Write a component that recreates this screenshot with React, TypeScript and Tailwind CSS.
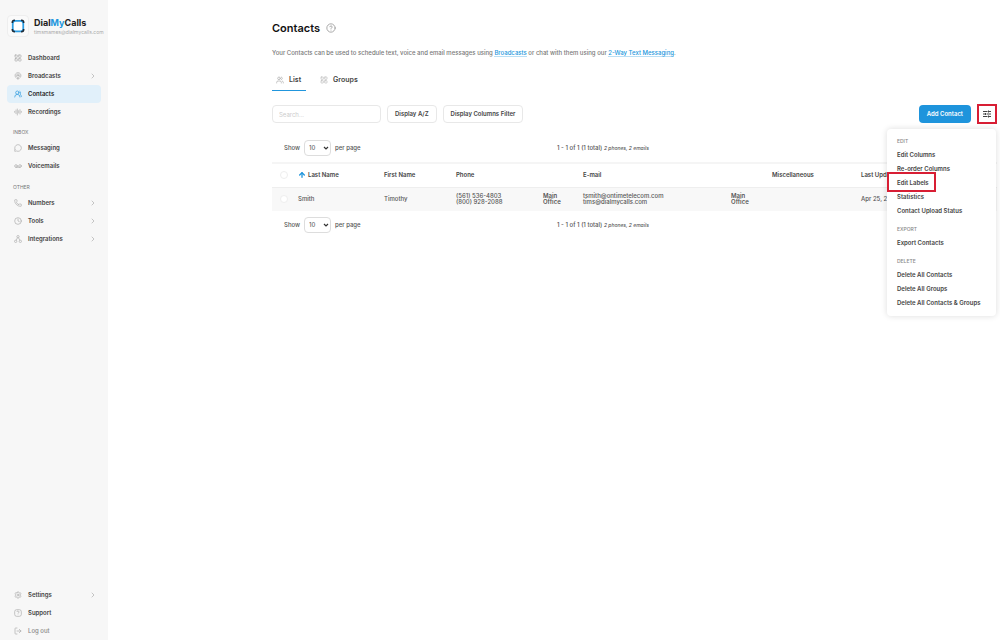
import { useState } from "react";
import type { ReactNode } from "react";
import {
  ArrowUp,
  AudioLines,
  ChevronRight,
  CircleQuestionMark,
  Clock,
  LayoutGrid,
  LogOut,
  MessageCircle,
  Phone,
  Podcast,
  Settings,
  Users,
  UsersRound,
  Voicemail,
} from "lucide-react";

type NavItem = {
  label: string;
  icon: ReactNode;
  arrow?: boolean;
  active?: boolean;
  muted?: boolean;
};

const iconClass = "w-2 h-2 shrink-0";

function IntegrationsIcon() {
  return (
    <svg viewBox="0 0 24 24" className={iconClass} fill="none" stroke="currentColor" strokeWidth="2">
      <circle cx="12" cy="5" r="3.500" />
      <circle cx="5" cy="19" r="3.500" />
      <circle cx="19" cy="19" r="3.500" />
      <path d="M10.500 8L6.500 16M13.500 8l4 8" />
    </svg>
  );
}

function SupportIcon() {
  return (
    <svg viewBox="0 0 24 24" className={iconClass} fill="none" stroke="currentColor" strokeWidth="2">
      <rect x="2" y="2" width="20" height="20" rx="6" />
      <path d="M9 9a3 3 0 1 1 4.500 2.600c-1 .6-1.500 1-1.500 2.400M12 17v1" />
    </svg>
  );
}

const mainNav: NavItem[] = [
  { label: "Dashboard", icon: <LayoutGrid className={iconClass} /> },
  { label: "Broadcasts", icon: <Podcast className={iconClass} />, arrow: true },
  { label: "Contacts", icon: <UsersRound className={iconClass} />, active: true },
  { label: "Recordings", icon: <AudioLines className={iconClass} /> },
];

const inboxNav: NavItem[] = [
  { label: "Messaging", icon: <MessageCircle className={iconClass} /> },
  { label: "Voicemails", icon: <Voicemail className={iconClass} /> },
];

const otherNav: NavItem[] = [
  { label: "Numbers", icon: <Phone className={iconClass} />, arrow: true },
  { label: "Tools", icon: <Clock className={iconClass} />, arrow: true },
  { label: "Integrations", icon: <IntegrationsIcon />, arrow: true },
];

const footerNav: NavItem[] = [
  { label: "Settings", icon: <Settings className={iconClass} />, arrow: true },
  { label: "Support", icon: <SupportIcon /> },
  { label: "Log out", icon: <LogOut className={iconClass} />, muted: true },
];

const menu = [
  {
    title: "EDIT",
    items: ["Edit Columns", "Re-order Columns", "Edit Labels", "Statistics", "Contact Upload Status"],
  },
  { title: "EXPORT", items: ["Export Contacts"] },
  { title: "DELETE", items: ["Delete All Contacts", "Delete All Groups", "Delete All Contacts & Groups"] },
];

function Logo() {
  return (
    <svg viewBox="0 0 16 16" className="h-3.5 w-3.5" fill="none">
      <rect x="2" y="2" width="12" height="12" rx="3" fill="#fff" stroke="#2a9be0" strokeWidth="2" />
      <path
        d="M1.500 4.500V4Q1.500 1.500 4 1.500h.5M11.500 1.500H12q2.500 0 2.500 2.500v.5M14.500 11.500V12q0 2.500-2.500 2.500h-.5M4.500 14.500H4Q1.500 14.500 1.500 12v-.5"
        stroke="#1e2b38"
        strokeWidth="1.800"
      />
    </svg>
  );
}

function NavList({ items }: { items: NavItem[] }) {
  return (
    <ul>
      {items.map((item) => (
        <li key={item.label}>
          <a
            href="#"
            className={
              "flex h-[18px] items-center gap-1.5 rounded-sm pl-[7px] pr-1 text-[6px] " +
              (item.active
                ? "bg-[#e1f0fa] font-semibold text-[#222]"
                : item.muted
                  ? "font-medium text-[#888]"
                  : "font-semibold text-[#444]")
            }
          >
            <span className={item.active ? "text-[#2196dd]" : "text-[#aaa]"}>{item.icon}</span>
            <span className="flex-1">{item.label}</span>
            {item.arrow && <ChevronRight className="h-2 w-2 text-[#aaa]" />}
          </a>
        </li>
      ))}
    </ul>
  );
}

function Pager({ id }: { id: string }) {
  return (
    <div className="grid grid-cols-[285px_1fr] items-center text-[6px] font-medium text-[#555]">
      <div className="flex items-center gap-1 pl-3">
        <label htmlFor={id}>Show</label>
        <span className="relative flex items-center">
          <select
            id={id}
            defaultValue="10"
            className="h-4 w-[27px] appearance-none rounded-sm border border-[#ddd] bg-white pl-1 text-[#666]"
          >
            <option>10</option>
            <option>25</option>
            <option>50</option>
          </select>
          <svg viewBox="0 0 6 4" className="pointer-events-none absolute right-0.5 h-1 w-1.5">
            <path d="M1 1l2 2 2-2" stroke="#333" strokeWidth="1.2" fill="none" />
          </svg>
        </span>
        <span>per page</span>
      </div>
      <p>
        1 - 1 of 1 (1 total) <em className="text-[5px]">2 phones, 2 emails</em>
      </p>
    </div>
  );
}

export default function App() {
  const [search, setSearch] = useState("");

  return (
    <div className="flex min-h-screen bg-white font-['Inter',sans-serif] text-[6px] leading-[8px] text-[#333]">
      <aside className="flex w-[108px] shrink-0 flex-col bg-[#f7f7f7] px-[7px] pt-[15px]">
        <div className="flex items-center gap-[5px]">
          <span className="flex h-[22px] w-[22px] shrink-0 items-center justify-center rounded-sm border border-[#eee] bg-[#fafafa]">
            <Logo />
          </span>
          <div className="min-w-0">
            <p className="text-[9px] font-bold leading-[11px] text-[#222]">
              Dial<span className="text-[#2196dd]">My</span>Calls
            </p>
            <p className="whitespace-nowrap text-[5px] text-[#aaa]">timsmames@dialmycalls.com</p>
          </div>
        </div>
        <nav className="flex flex-1 flex-col pt-3">
          <NavList items={mainNav} />
          <h2 className="pt-[7px] pb-[3px] pl-1.5 text-[5px] text-[#777]">INBOX</h2>
          <NavList items={inboxNav} />
          <h2 className="pt-2 pb-[3px] pl-1.5 text-[5px] text-[#777]">OTHER</h2>
          <NavList items={otherNav} />
          <div className="mt-auto">
            <NavList items={footerNav} />
          </div>
        </nav>
      </aside>

      <main className="min-w-0 flex-1 pt-[21px] pr-[3px] pl-[164px]">
        <h1 className="flex items-center gap-1.5 text-[11px] font-semibold leading-[14px] text-[#111]">
          Contacts
          <CircleQuestionMark className="h-2.5 w-2.5 text-[#999]" />
        </h1>
        <p className="pt-3.5 font-medium text-[#777]">
          Your Contacts can be used to schedule text, voice and email messages using{" "}
          <a href="#" className="border-b border-[#b9dff5] text-[#2196dd]">Broadcasts</a> or chat with them using our{" "}
          <a href="#" className="border-b border-[#b9dff5] text-[#2196dd]">2-Way Text Messaging</a>.
        </p>

        <div className="flex gap-2.5 pt-[13px] text-[7px] font-semibold text-[#444]">
          <button
            type="button"
            className="flex h-[21px] items-center gap-[5px] border-b border-[#2196dd] pr-[5px] pl-1"
          >
            <Users className="h-2 w-2 text-[#aaa]" />
            List
          </button>
          <button
            type="button"
            className="flex h-[21px] items-center gap-[5px] border-b border-transparent px-1"
          >
            <LayoutGrid className="h-2 w-2 text-[#bbb]" />
            Groups
          </button>
        </div>

        <div className="flex items-center gap-1.5 pt-[13px] font-semibold text-[#444]">
          <input
            type="text"
            aria-label="Search"
            placeholder="Search..."
            value={search}
            onChange={(e) => setSearch(e.target.value)}
            className="h-[18px] w-[109px] rounded-sm border border-[#e8e8e8] px-1.5 font-normal placeholder:text-[#ccc]"
          />
          <button type="button" className="h-[18px] rounded-sm border border-[#e8e8e8] px-[7px]">
            Display A/Z
          </button>
          <button type="button" className="h-[18px] rounded-sm border border-[#e8e8e8] px-[7px]">
            Display Columns Filter
          </button>
          <button
            type="button"
            className="ml-auto h-[18px] rounded-sm bg-[#1e94dc] px-2 font-semibold text-white"
          >
            Add Contact
          </button>
          <div className="relative">
            <button
              type="button"
              aria-label="More options"
              className="flex h-5 w-5 items-center justify-center border-2 border-[#d81e34]"
            >
              <svg viewBox="0 0 8 8" className="h-2 w-2" stroke="#444" strokeWidth="1">
                <path d="M0 1.500h4.500M6 1.500h2M0 4h2M3.500 4h4.500M0 6.500h4.500M6 6.500h2M5.500 .5v2M2.500 3v2M5.500 5.500v2" />
              </svg>
            </button>
            <div className="absolute top-[25px] right-px z-10 w-[109px] rounded-sm bg-white pt-2 pb-1.5 pl-2.5 shadow-[0_0_6px_rgba(0,0,0,0.14)]">
              {menu.map((group) => (
                <section key={group.title} className="pb-[7px] last:pb-0">
                  <h3 className="h-[11px] text-[5px] font-medium text-[#888]">{group.title}</h3>
                  {group.items.map((label) => (
                    <a key={label} href="#" className="relative flex h-3.5 items-center whitespace-nowrap">
                      {label}
                      {label === "Edit Labels" && (
                        <span className="absolute -top-1 -left-2.5 h-5 w-[49px] border-2 border-[#d81e34]" />
                      )}
                    </a>
                  ))}
                </section>
              ))}
            </div>
          </div>
        </div>

        <div className="pt-4 pb-1.5">
          <Pager id="per-page-top" />
        </div>
        <table className="w-full table-fixed border-t-2 border-[#f5f5f5] text-left">
          <colgroup>
            <col className="w-[26px]" />
            <col className="w-[86px]" />
            <col className="w-[72px]" />
            <col className="w-[87px]" />
            <col className="w-10" />
            <col className="w-[148px]" />
            <col className="w-[41px]" />
            <col className="w-[89px]" />
            <col />
          </colgroup>
          <thead>
            <tr className="h-6 text-[#444] [&>th]:font-semibold">
              <th className="pl-2">
                <input
                  type="checkbox"
                  aria-label="Select all"
                  className="block h-2 w-2 appearance-none rounded-sm border border-[#eee] bg-white"
                />
              </th>
              <th>
                <span className="flex items-center gap-0.5">
                  <ArrowUp className="h-2 w-2 text-[#2196dd]" strokeWidth={4} />
                  Last Name
                </span>
              </th>
              <th>First Name</th>
              <th colSpan={2}>Phone</th>
              <th colSpan={2}>E-mail</th>
              <th>Miscellaneous</th>
              <th>Last Updated</th>
            </tr>
          </thead>
          <tbody>
            <tr className="h-6 border-t border-[#eee] bg-[#f8f8f8] font-medium text-[#555]">
              <td className="pl-2">
                <input
                  type="checkbox"
                  aria-label="Select Timothy Smith"
                  className="block h-2 w-2 appearance-none rounded-sm border border-[#eee] bg-white"
                />
              </td>
              <td>Smith</td>
              <td>Timothy</td>
              <td className="leading-[6px]">(561) 536-4803<br />(800) 928-2088</td>
              <td className="font-semibold leading-[6px]">Main<br />Office</td>
              <td className="leading-[6px]">tsmith@ontimetelecom.com<br />tims@dialmycalls.com</td>
              <td className="font-semibold leading-[6px]">Main<br />Office</td>
              <td />
              <td>Apr 25, 2022</td>
            </tr>
          </tbody>
        </table>
        <div className="pt-1.5">
          <Pager id="per-page-bottom" />
        </div>
      </main>
    </div>
  );
}
